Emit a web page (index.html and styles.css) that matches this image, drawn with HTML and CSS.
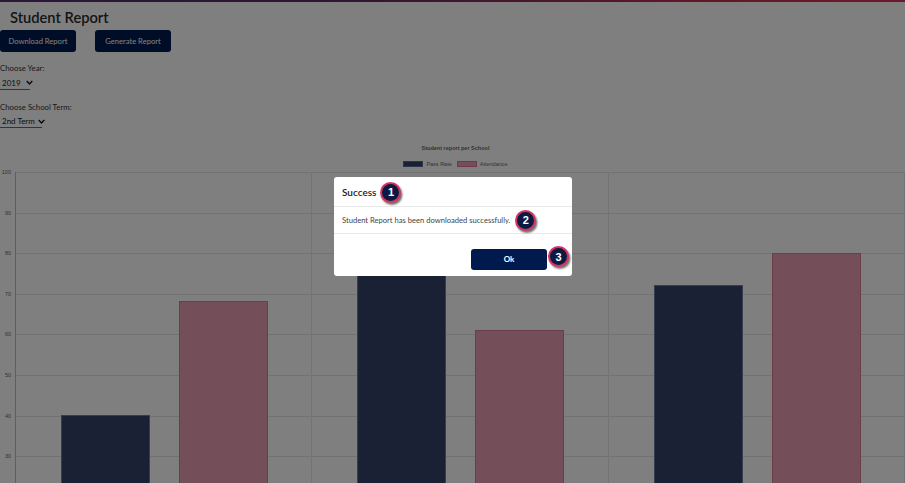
FILE: index.html
```html
<!DOCTYPE html>
<html lang="en">
<head>
<meta charset="utf-8">
<title>Student Report</title>
<link rel="stylesheet" href="styles.css">
</head>
<body>
<div class="topbar"></div>
<main class="page">
  <h1 class="title">Student Report</h1>
  <div class="actions">
    <button class="btn">Download Report</button>
    <button class="btn">Generate Report</button>
  </div>
  <div class="field">
    <div class="label">Choose Year:</div>
    <div class="select select-year"><span>2019</span><svg class="chev" viewBox="0 0 10 6" width="7" height="5"><path d="M1 1l4 4 4-4" fill="none" stroke="#111" stroke-width="2"/></svg></div>
  </div>
  <div class="field">
    <div class="label">Choose School Term:</div>
    <div class="select select-term"><span>2nd Term</span><svg class="chev" viewBox="0 0 10 6" width="7" height="5"><path d="M1 1l4 4 4-4" fill="none" stroke="#111" stroke-width="2"/></svg></div>
  </div>

  <section class="chart">
    <div class="chart-title">Student report per School</div>
    <div class="legend">
      <span class="swatch swatch-pass"></span><span class="legend-text">Pass Rate</span>
      <span class="swatch swatch-att"></span><span class="legend-text">Attendance</span>
    </div>
    <div class="plot-wrap">
      <div class="yaxis">
        <div class="tick"><span>100</span></div>
        <div class="tick"><span>90</span></div>
        <div class="tick"><span>80</span></div>
        <div class="tick"><span>70</span></div>
        <div class="tick"><span>60</span></div>
        <div class="tick"><span>50</span></div>
        <div class="tick"><span>40</span></div>
        <div class="tick"><span>30</span></div>
      </div>
      <div class="plot">
        <div class="cat">
          <div class="bar bar-pass" style="height:163px"></div>
          <div class="bar bar-att" style="height:277px"></div>
        </div>
        <div class="cat">
          <div class="bar bar-pass" style="height:345px"></div>
          <div class="bar bar-att" style="height:248px"></div>
        </div>
        <div class="cat">
          <div class="bar bar-pass" style="height:293px"></div>
          <div class="bar bar-att" style="height:325px"></div>
        </div>
      </div>
    </div>
  </section>
</main>

<div class="overlay">
  <div class="modal">
    <div class="modal-header">
      <span class="modal-title">Success</span>
      <span class="badge badge-1">1</span>
    </div>
    <div class="modal-body">
      <span>Student Report has been downloaded successfully.</span>
      <span class="badge badge-2">2</span>
    </div>
    <div class="modal-footer">
      <div class="ok-wrap">
        <button class="btn btn-ok">Ok</button>
        <span class="badge badge-3">3</span>
      </div>
    </div>
  </div>
</div>
</body>
</html>
```

FILE: styles.css
```css
* { box-sizing: border-box; }
html, body {
  margin: 0;
  padding: 0;
  background: #ffffff;
  overflow: hidden;
  height: 100%;
}
body {
  font-family: "Lato", "Open Sans", sans-serif;
  color: #333;
}
.topbar {
  height: 2px;
  background: linear-gradient(to right, #54306e 0%, #5a2c66 35%, #c6304f 80%, #d6345c 100%);
}
.page {
  padding: 0;
}
.title {
  margin: 0;
  padding: 5px 0 0 10px;
  height: 28px;
  font-size: 14.7px;
  font-weight: 600;
  color: #2a2a2a;
  line-height: 20px;
}
.actions {
  display: flex;
  gap: 19px;
  height: 22px;
}
.btn {
  width: 76px;
  height: 22px;
  border: none;
  border-radius: 3px;
  background: #001a4d;
  color: #fff;
  font-family: "Lato", sans-serif;
  font-size: 7.6px;
  padding: 0;
  cursor: pointer;
}
.field {
  display: flex;
  flex-direction: column;
  align-items: flex-start;
}
.label {
  font-size: 7.8px;
  line-height: 10px;
  color: #333;
  margin-top: 12px;
  white-space: nowrap;
}
.actions + .field .label { margin-top: 11px; }
.select {
  display: flex;
  align-items: center;
  gap: 5px;
  margin-top: 4px;
  padding: 0 0 0 2px;
  height: 12.5px;
  font-size: 8px;
  color: #222;
  white-space: nowrap;
  border-bottom: 1.5px solid #d6345c;
}
.select-year { width: 30px; }
.select-term { width: 42px; gap: 3px; }
.chev { display: block; flex: none; }

.chart {
  margin-top: 16px;
  font-family: "Liberation Sans", Arial, sans-serif;
}
.chart-title {
  text-align: center;
  font-size: 5.5px;
  font-weight: bold;
  color: #666;
  line-height: 8px;
  padding-left: 6px;
}
.legend {
  display: flex;
  justify-content: center;
  align-items: center;
  margin-top: 7px;
  height: 10px;
  font-size: 5.5px;
  color: #666;
  padding-left: 6px;
}
.swatch {
  width: 20px;
  height: 6px;
  display: inline-block;
  margin-right: 3px;
}
.swatch-pass { background: #34426a; border: 1px solid #5a6a90; }
.swatch-att { background: #e89eb4; border: 1px solid #dc7494; margin-left: 5px; }
.legend-text { display: inline-block; }

.plot-wrap {
  display: flex;
  margin-top: 3px;
}
.yaxis {
  width: 16px;
  flex: none;
  border-right: 1.5px solid #bdbdbd;
}
.tick {
  height: 40.6px;
  position: relative;
  font-size: 5.5px;
  color: #666;
  text-align: right;
  padding-right: 4px;
}
.tick span {
  display: block;
  transform: translateY(-50%);
  line-height: 6px;
}
.plot {
  flex: 1;
  height: 406px;
  display: grid;
  grid-template-columns: repeat(3, 1fr);
  background-image: repeating-linear-gradient(to bottom, #e4e4e4 0, #e4e4e4 1px, transparent 1px, transparent 40.6px);
}
.cat {
  display: flex;
  justify-content: center;
  align-items: flex-end;
  gap: 29px;
  border-right: 1px solid #e6e6e6;
  padding-left: 2px;
}
.bar {
  width: 89px;
}
.bar-pass { background: #34426a; border: 1px solid #6c7ca4; }
.bar-att { background: #e89eb4; border: 1px solid #d87a96; }

.overlay {
  position: fixed;
  inset: 0;
  background: rgba(0, 0, 0, 0.5);
  display: flex;
  justify-content: center;
  align-items: flex-start;
  padding-top: 177px;
  padding-left: 1px;
}
.modal {
  width: 238px;
  background: #fff;
  border-radius: 3px;
  font-family: "Lato", sans-serif;
}
.modal-header {
  display: flex;
  align-items: center;
  height: 30px;
  padding: 0 8px;
  border-bottom: 1px solid #e9e9e9;
}
.modal-title {
  font-size: 10px;
  font-weight: 600;
  color: #222;
}
.modal-body {
  display: flex;
  align-items: center;
  height: 27px;
  padding: 0 8px;
  border-bottom: 1px solid #e9e9e9;
  font-size: 7.6px;
  color: #444;
}
.modal-footer {
  display: flex;
  justify-content: flex-end;
  height: 42px;
  padding: 12px 25px 0 0;
}
.ok-wrap { position: relative; }
.btn-ok {
  width: 76px;
  height: 21px;
  font-weight: bold;
  font-size: 8px;
  background: #001a4d;
}
.badge {
  width: 21px;
  height: 21px;
  border-radius: 50%;
  background: #0a1a44;
  border: 2px solid #d6345c;
  color: #fff;
  font-family: "Liberation Sans", Arial, sans-serif;
  font-weight: bold;
  font-size: 11px;
  display: inline-flex;
  align-items: center;
  justify-content: center;
  box-shadow: 1.5px 2px 2px rgba(0, 0, 0, 0.55);
}
.badge-1 { margin-left: 4px; margin-top: 1px; }
.badge-2 { margin-left: 5px; }
.badge-3 {
  position: absolute;
  left: 77px;
  top: 0;
}
```
